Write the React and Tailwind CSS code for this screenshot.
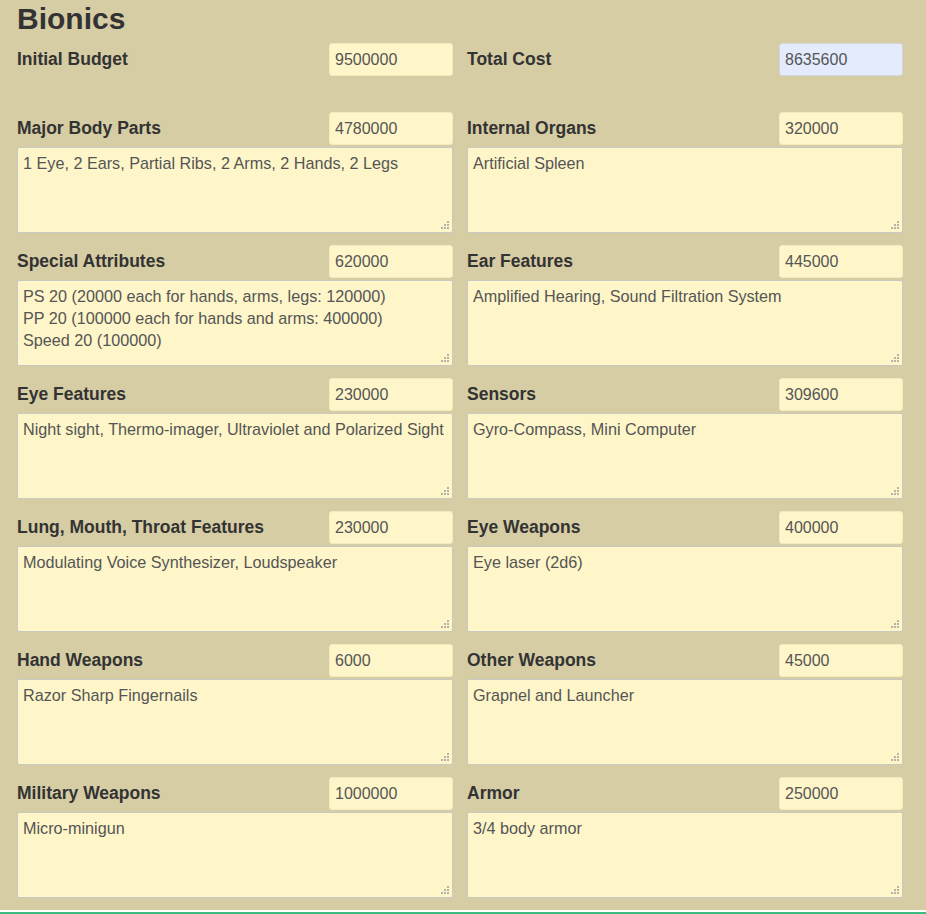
import React from "react";

const font = { fontFamily: '"Liberation Sans", Arial, sans-serif' };

function Grip() {
  return (
    <svg
      className="pointer-events-none absolute bottom-[4px] right-[4px]"
      width="8"
      height="8"
      viewBox="0 0 8 8"
    >
      <g fill="#b5b2a8">
        <rect x="6" y="0" width="2" height="2" />
        <rect x="3" y="3" width="2" height="2" />
        <rect x="6" y="3" width="2" height="2" />
        <rect x="0" y="6" width="2" height="2" />
        <rect x="3" y="6" width="2" height="2" />
        <rect x="6" y="6" width="2" height="2" />
      </g>
    </svg>
  );
}

function Field({ label, value, text }) {
  return (
    <div className="flex flex-col">
      <div className="flex h-[33px] items-center justify-between">
        <span className="text-[17.5px] font-bold text-[#333]">{label}</span>
        <input
          readOnly
          value={value}
          className="h-[33px] w-[124px] rounded-[3px] border border-[#f3ebc0] bg-[#fef6c9] px-[5px] text-[16px] text-[#555] outline-none"
        />
      </div>
      <div className="relative mt-[2px]">
        <textarea
          readOnly
          value={text}
          className="block h-[86px] w-full resize-none rounded-[2px] border border-[#c9c9c4] bg-[#fef6c9] px-[5px] pt-[4px] text-[16.2px] leading-[22px] text-[#555] outline-none"
        />
        <Grip />
      </div>
    </div>
  );
}

const fields = [
  ["Major Body Parts", "4780000", "1 Eye, 2 Ears, Partial Ribs, 2 Arms, 2 Hands, 2 Legs"],
  ["Internal Organs", "320000", "Artificial Spleen"],
  [
    "Special Attributes",
    "620000",
    "PS 20 (20000 each for hands, arms, legs: 120000)\nPP 20 (100000 each for hands and arms: 400000)\nSpeed 20 (100000)",
  ],
  ["Ear Features", "445000", "Amplified Hearing, Sound Filtration System"],
  ["Eye Features", "230000", "Night sight, Thermo-imager, Ultraviolet and Polarized Sight"],
  ["Sensors", "309600", "Gyro-Compass, Mini Computer"],
  ["Lung, Mouth, Throat Features", "230000", "Modulating Voice Synthesizer, Loudspeaker"],
  ["Eye Weapons", "400000", "Eye laser (2d6)"],
  ["Hand Weapons", "6000", "Razor Sharp Fingernails"],
  ["Other Weapons", "45000", "Grapnel and Launcher"],
  ["Military Weapons", "1000000", "Micro-minigun"],
  ["Armor", "250000", "3/4 body armor"],
];

export default function App() {
  return (
    <div className="min-h-[914px] w-[926px] bg-white" style={font}>
      <div className="bg-[#d6cda4] pb-[12px] pl-[17px] pt-[2px]">
        <h1 className="text-[30px] font-bold leading-[34px] text-[#333]">Bionics</h1>
        <div className="mt-[7px] grid grid-cols-[436px_436px] gap-x-[14px]">
          <div className="flex h-[33px] items-center justify-between">
            <span className="text-[17.5px] font-bold text-[#333]">Initial Budget</span>
            <input
              readOnly
              value="9500000"
              className="h-[33px] w-[124px] rounded-[3px] border border-[#f3ebc0] bg-[#fef6c9] px-[5px] text-[16px] text-[#555] outline-none"
            />
          </div>
          <div className="flex h-[33px] items-center justify-between">
            <span className="text-[17.5px] font-bold text-[#333]">Total Cost</span>
            <input
              readOnly
              value="8635600"
              className="h-[33px] w-[124px] rounded-[3px] border border-[#d3d7df] bg-[#e3ebfc] px-[5px] text-[16px] text-[#555] outline-none"
            />
          </div>
        </div>
        <div className="mt-[36px] grid grid-cols-[436px_436px] gap-x-[14px] gap-y-[12px]">
          {fields.map(([l, v, t]) => (
            <Field key={l} label={l} value={v} text={t} />
          ))}
        </div>
      </div>
      <div className="mt-[2px] h-[2px] bg-[#3dba7e]" />
    </div>
  );
}
